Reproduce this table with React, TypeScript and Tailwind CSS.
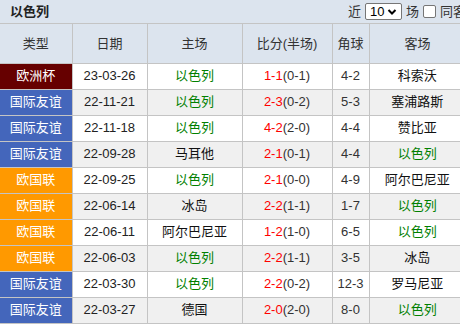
import React from "react";

type Row = {
  type: "欧洲杯" | "国际友谊" | "欧国联";
  date: string;
  home: string;
  score: string;
  half: string;
  corner: string;
  away: string;
};

const rows: Row[] = [
  { type: "欧洲杯", date: "23-03-26", home: "以色列", score: "1-1", half: "(0-1)", corner: "4-2", away: "科索沃" },
  { type: "国际友谊", date: "22-11-21", home: "以色列", score: "2-3", half: "(0-2)", corner: "5-3", away: "塞浦路斯" },
  { type: "国际友谊", date: "22-11-18", home: "以色列", score: "4-2", half: "(2-0)", corner: "4-4", away: "赞比亚" },
  { type: "国际友谊", date: "22-09-28", home: "马耳他", score: "2-1", half: "(0-1)", corner: "4-4", away: "以色列" },
  { type: "欧国联", date: "22-09-25", home: "以色列", score: "2-1", half: "(0-0)", corner: "4-9", away: "阿尔巴尼亚" },
  { type: "欧国联", date: "22-06-14", home: "冰岛", score: "2-2", half: "(1-1)", corner: "1-7", away: "以色列" },
  { type: "欧国联", date: "22-06-11", home: "阿尔巴尼亚", score: "1-2", half: "(1-0)", corner: "6-5", away: "以色列" },
  { type: "欧国联", date: "22-06-03", home: "以色列", score: "2-2", half: "(1-1)", corner: "3-5", away: "冰岛" },
  { type: "国际友谊", date: "22-03-30", home: "以色列", score: "2-2", half: "(0-2)", corner: "12-3", away: "罗马尼亚" },
  { type: "国际友谊", date: "22-03-27", home: "德国", score: "2-0", half: "(2-0)", corner: "8-0", away: "以色列" },
];

const typeBg: Record<Row["type"], string> = {
  欧洲杯: "bg-[#660000]",
  国际友谊: "bg-[#4466bb]",
  欧国联: "bg-[#ff9900]",
};

function Team({ name }: { name: string }) {
  return <span className={name === "以色列" ? "text-[#008000]" : "text-[#111]"}>{name}</span>;
}

export default function App() {
  return (
    <div
      className="w-[460px] h-[325px] overflow-hidden bg-white text-[13px] text-[#333]"
      style={{ fontFamily: '"Liberation Sans", "Noto Sans CJK SC", sans-serif' }}
    >
      <div className="w-[466px] h-[24px] flex items-center justify-between bg-[#dce4ee] border-b border-[#c4c4c4] pl-[10px]">
        <span className="font-bold text-[#222] text-[13px]">以色列</span>
        <div className="flex items-center gap-[4px] text-[#333]">
          <span>近</span>
          <div className="w-[37px] h-[17px] bg-white border border-[#767676] rounded-[2px] flex items-center justify-between px-[4px] text-[13px] text-black">
            <span>10</span>
            <svg width="10" height="8" viewBox="0 0 10 8">
              <path d="M1.5 2 L5 5.5 L8.5 2" stroke="#000" strokeWidth="2" fill="none" />
            </svg>
          </div>
          <span>场</span>
          <div className="w-[13px] h-[13px] bg-white border border-[#767676] rounded-[2px]" />
          <span className="whitespace-nowrap">同客</span>
        </div>
      </div>
      <table className="w-[466px] border-collapse table-fixed">
        <colgroup>
          <col className="w-[72px]" />
          <col className="w-[75px]" />
          <col className="w-[95px]" />
          <col className="w-[90px]" />
          <col className="w-[37px]" />
          <col />
        </colgroup>
        <thead>
          <tr className="h-[39px] bg-[#dce4ee] text-[#333]">
            {["类型", "日期", "主场", "比分(半场)", "角球", "客场"].map((h, i) => (
              <th
                key={h}
                className={`font-normal border-b border-[#c4c4c4] ${i > 0 ? "border-l" : ""} border-[#c4c4c4] p-0`}
              >
                {h}
              </th>
            ))}
          </tr>
        </thead>
        <tbody>
          {rows.map((r, i) => (
            <tr key={i} className={`h-[26px] ${i % 2 === 0 ? "bg-white" : "bg-[#f0f0f0]"}`}>
              <td className={`${typeBg[r.type]} text-white text-center border-b border-[#c4c4c4] p-0`}>{r.type}</td>
              <td className="text-center border border-[#c4c4c4] p-0 text-[#222]">{r.date}</td>
              <td className="text-center border border-[#c4c4c4] p-0">
                <Team name={r.home} />
              </td>
              <td className="text-center border border-[#c4c4c4] p-0">
                <span className="text-[#ff0000]">{r.score}</span>
                <span className="text-[#333]">{r.half}</span>
              </td>
              <td className="text-center border border-[#c4c4c4] p-0 text-[#333]">{r.corner}</td>
              <td className="text-center border border-[#c4c4c4] p-0">
                <Team name={r.away} />
              </td>
            </tr>
          ))}
        </tbody>
      </table>
    </div>
  );
}
